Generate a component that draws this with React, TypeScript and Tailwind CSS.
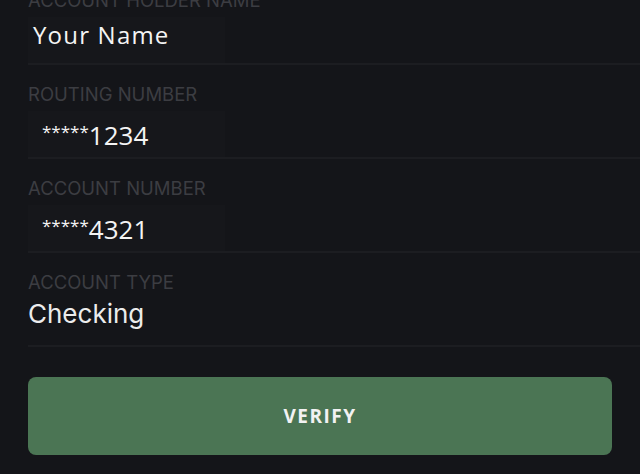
import React from 'react'

const label = "block h-[20px] text-[18.5px] leading-[20px] uppercase text-[#3c3d42] font-['Inter',sans-serif]"
const valueFont = "font-['Open_Sans',sans-serif] font-medium text-[#f4f4f4]"

function Field({ name, children, first }: { name: string; children: React.ReactNode; first?: boolean }) {
  return (
    <div className={`flex flex-col border-b-2 border-[#1c1d21] ${first ? '' : 'pt-[19px]'}`}>
      <span className={label}>{name}</span>
      <div className="flex h-[53px] items-end">{children}</div>
    </div>
  )
}

export default function App() {
  return (
    <div className="h-[474px] w-[640px] overflow-hidden bg-[#141519]">
      <div className="-mt-[10px] w-[680px] pl-[28px]">
        <Field name="Account Holder Name" first>
          <div className="flex h-[46px] w-[197px] items-end bg-[#16171b] pb-[14px] pl-[5px]">
            <span className={`${valueFont} text-[24px] leading-[28px] tracking-[1.2px]`}>Your Name</span>
          </div>
        </Field>
        <Field name="Routing Number">
          <div className="flex h-[46px] w-[197px] items-end bg-[#16171b] pb-[6px] pl-[14px]">
            <span className={`${valueFont} text-[26px] leading-[32px]`}>
              <span className="align-[7px] text-[17px]">*****</span>1234
            </span>
          </div>
        </Field>
        <Field name="Account Number">
          <div className="flex h-[46px] w-[197px] items-end bg-[#16171b] pb-[6px] pl-[14px]">
            <span className={`${valueFont} text-[26px] leading-[32px]`}>
              <span className="align-[7px] text-[17px]">*****</span>4321
            </span>
          </div>
        </Field>
        <Field name="Account Type">
          <span className="pb-[15px] font-['Inter',sans-serif] text-[26px] leading-[32px] text-[#ececec]">Checking</span>
        </Field>
        <div className="pr-[68px] pt-[30px]">
          <button className="flex h-[78px] w-[584px] items-center justify-center rounded-lg bg-[#4b7554] font-['Open_Sans',sans-serif] text-[19px] font-bold tracking-[1.5px] text-[#f2f2f2]">
            VERIFY
          </button>
        </div>
      </div>
    </div>
  )
}
